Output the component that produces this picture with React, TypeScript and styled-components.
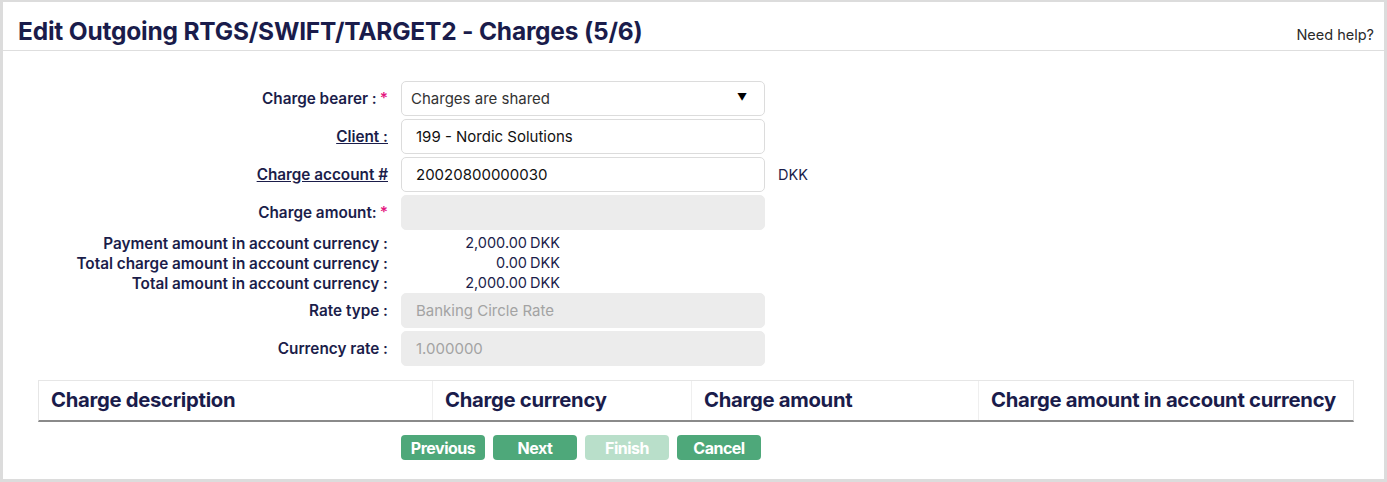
import React from 'react';
import styled, { createGlobalStyle } from 'styled-components';

const GlobalStyle = createGlobalStyle`
  html, body {
    margin: 0;
    padding: 0;
    background: #ffffff;
  }
  body {
    font-family: Inter, "Noto Sans", "Liberation Sans", sans-serif;
    color: #1b1d4a;
  }
`;

const Frame = styled.div`
  box-sizing: border-box;
  width: 1387px;
  height: 482px;
  border: 3px solid #dcdcdc;
  border-top-width: 2px;
  background: #fff;
  display: flex;
  flex-direction: column;
`;

const Header = styled.div`
  height: 49px;
  box-sizing: border-box;
  border-bottom: 1px solid #dedede;
  display: flex;
  align-items: center;
  justify-content: space-between;
  padding: 9px 10px 0 15px;
`;

const Title = styled.h1`
  margin: 0;
  font-size: 24.5px;
  font-weight: 700;
  letter-spacing: -0.2px;
  color: #1a1c4b;
`;

const Help = styled.a`
  font-size: 14.5px;
  color: #2a2a2a;
  text-decoration: none;
  margin-top: 8px;
`;

const Form = styled.div`
  display: flex;
  flex-direction: column;
  gap: 3px;
  margin-top: 30px;
`;

const Row = styled.div<{ $tight?: boolean }>`
  display: grid;
  grid-template-columns: 385px 364px auto;
  column-gap: 13px;
  align-items: center;
  min-height: ${({ $tight }) => ($tight ? '20px' : '35px')};
`;

const Label = styled.label<{ $link?: boolean }>`
  text-align: right;
  font-size: 15.3px;
  font-weight: 600;
  color: #1b1d4a;
  text-decoration: ${({ $link }) => ($link ? 'underline' : 'none')};
  white-space: nowrap;
`;

const Req = styled.span`
  color: #e4177f;
  margin-left: 3px;
`;

const Field = styled.div<{ $disabled?: boolean }>`
  box-sizing: border-box;
  height: 35px;
  border: 1px solid ${({ $disabled }) => ($disabled ? '#ececec' : '#dcdcdc')};
  border-radius: 5px;
  background: ${({ $disabled }) => ($disabled ? '#ececec' : '#fff')};
  color: ${({ $disabled }) => ($disabled ? '#a3a3a3' : '#111')};
  font-size: 15px;
  display: flex;
  align-items: center;
  justify-content: space-between;
  padding: 0 14px;
`;

const SelectField = styled(Field)`
  color: #333;
  padding: 0 17px 0 9px;
`;

const Arrow = styled.span`
  font-size: 10px;
  color: #000;
  margin-top: -3px;
`;

const Suffix = styled.span`
  font-size: 14.5px;
  color: #1b1d4a;
`;

const Amount = styled.div`
  display: grid;
  grid-template-columns: 126px auto;
  column-gap: 3px;
  font-size: 14.5px;
  color: #1b1d4a;
  line-height: 20px;
`;

const AmountValue = styled.span`
  text-align: right;
`;

const Table = styled.div`
  margin: 14px 30px 0 35px;
  display: grid;
  grid-template-columns: 393px 259px 287px 1fr;
  border: 1px solid #e6e6e6;
  border-bottom: 2px solid #8a8a8a;
  height: 42px;
  box-sizing: border-box;
`;

const HeadCell = styled.div`
  display: flex;
  align-items: center;
  padding: 0 12px 3px;
  font-size: 20.3px;
  font-weight: 700;
  letter-spacing: -0.3px;
  color: #1a1c4b;
  border-left: 1px solid #efefef;
  &:first-child {
    border-left: none;
  }
`;

const Buttons = styled.div`
  display: flex;
  gap: 8px;
  margin: 13px 0 0 398px;
`;

const Button = styled.button<{ $disabled?: boolean }>`
  width: 84px;
  height: 25px;
  border: none;
  border-radius: 4px;
  background: ${({ $disabled }) => ($disabled ? '#b9dfca' : '#4ea87a')};
  color: #fff;
  font-family: Inter, "Noto Sans", sans-serif;
  font-size: 16px;
  font-weight: 700;
  letter-spacing: -0.5px;
  padding: 0;
  cursor: pointer;
`;

const amounts = [
  { label: 'Payment amount in account currency :', value: '2,000.00' },
  { label: 'Total charge amount in account currency :', value: '0.00' },
  { label: 'Total amount in account currency :', value: '2,000.00' },
];

const columns = ['Charge description', 'Charge currency', 'Charge amount', 'Charge amount in account currency'];

export default function App() {
  return (
    <>
      <GlobalStyle />
      <Frame>
        <Header>
          <Title>Edit Outgoing RTGS/SWIFT/TARGET2 - Charges (5/6)</Title>
          <Help>Need help?</Help>
        </Header>

        <Form>
          <Row>
            <Label>
              Charge bearer :<Req>*</Req>
            </Label>
            <SelectField>
              <span>Charges are shared</span>
              <Arrow>▼</Arrow>
            </SelectField>
          </Row>
          <Row>
            <Label $link>Client :</Label>
            <Field>199 - Nordic Solutions</Field>
          </Row>
          <Row>
            <Label $link>Charge account #</Label>
            <Field>20020800000030</Field>
            <Suffix>DKK</Suffix>
          </Row>
          <Row>
            <Label>
              Charge amount:<Req>*</Req>
            </Label>
            <Field $disabled />
          </Row>
          {amounts.map((a) => (
            <Row $tight key={a.label} style={{ marginBottom: -3 }}>
              <Label>{a.label}</Label>
              <Amount>
                <AmountValue>{a.value}</AmountValue>
                <span>DKK</span>
              </Amount>
            </Row>
          ))}
          <Row>
            <Label>Rate type :</Label>
            <Field $disabled>Banking Circle Rate</Field>
          </Row>
          <Row>
            <Label>Currency rate :</Label>
            <Field $disabled>1.000000</Field>
          </Row>
        </Form>

        <Table>
          {columns.map((c) => (
            <HeadCell key={c}>{c}</HeadCell>
          ))}
        </Table>

        <Buttons>
          <Button>Previous</Button>
          <Button>Next</Button>
          <Button $disabled>Finish</Button>
          <Button>Cancel</Button>
        </Buttons>
      </Frame>
    </>
  );
}
